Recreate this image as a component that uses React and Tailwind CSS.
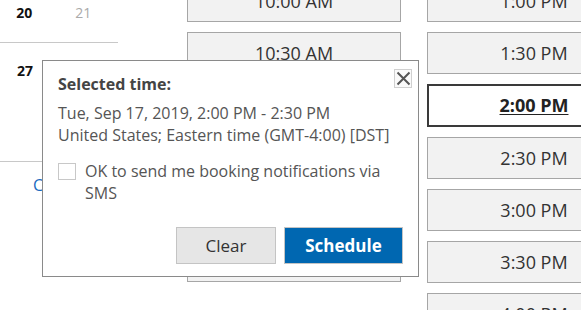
import React from 'react';

const colA = ['10:00 AM', '10:30 AM', '11:00 AM', '11:30 AM', '12:00 PM', '12:30 PM'];
const colB = ['1:00 PM', '1:30 PM', '2:00 PM', '2:30 PM', '3:00 PM', '3:30 PM', '4:00 PM'];

function Slot({ label, selected }) {
  if (selected) {
    return (
      <div className="h-[43px] shrink-0 border-2 border-[#3a3a3a] bg-white flex items-center justify-center text-[18px] font-bold text-[#222] underline underline-offset-2">
        {label}
      </div>
    );
  }
  return (
    <div className="h-[42px] shrink-0 border border-[#a6a6a6] bg-[#f2f2f2] flex items-center justify-center text-[18px] text-[#333]">
      {label}
    </div>
  );
}

export default function App() {
  return (
    <div className="relative w-[581px] h-[310px] overflow-hidden bg-white font-['Open_Sans',sans-serif]">
      <div className="flex">
        {/* calendar */}
        <div className="w-[118px] shrink-0 text-[14px]">
          <div className="h-[43px] border-b border-[#c8c8c8] flex items-start pt-[2px]">
            <span className="w-[50px] text-center font-bold text-[#111]">20</span>
            <span className="w-[72px] text-center text-[#aaa]">21</span>
          </div>
          <div className="h-[119px] border-b border-[#c8c8c8] flex items-start pt-[17px]">
            <span className="w-[50px] text-center font-bold text-[#111]">27</span>
          </div>
          <div className="pl-[33px] pt-[11px] text-[16px] text-[#1a6bbf]">Change</div>
        </div>

        {/* time slots */}
        <div className="ml-[69px] -mt-[20px] flex gap-[26px]">
          <div className="w-[214px] flex flex-col gap-[10px]">
            {colA.map((t) => (
              <Slot key={t} label={t} />
            ))}
          </div>
          <div className="w-[214px] flex flex-col gap-[10px]">
            {colB.map((t) => (
              <Slot key={t} label={t} selected={t === '2:00 PM'} />
            ))}
          </div>
        </div>
      </div>

      {/* popup */}
      <div className="absolute left-[42px] top-[60px] w-[377px] h-[217px] border border-[#8a8a8a] bg-white pl-[15px] pr-[15px] pt-[12px]">
        <button className="absolute right-[6px] top-[8px] w-[18px] h-[19px] border border-[#d0d0d0] bg-[#fafafa] flex items-center justify-center">
          <svg width="15" height="15" viewBox="0 0 15 15">
            <path d="M1.5 1.5 L13.5 13.5 M13.5 1.5 L1.5 13.5" stroke="#555" strokeWidth="2" />
          </svg>
        </button>
        <div className="text-[16px] font-bold text-[#444] leading-[22px]">Selected time:</div>
        <div className="mt-[7px] text-[16px] text-[#555] leading-[22px]">
          <div>Tue, Sep 17, 2019, 2:00 PM - 2:30 PM</div>
          <div>United States; Eastern time (GMT-4:00) [DST]</div>
        </div>
        <div className="mt-[14px] flex items-start gap-[9px]">
          <span className="mt-[3px] w-[18px] h-[17px] shrink-0 border border-[#c8c8c8] bg-white"></span>
          <span className="w-[300px] text-[16px] text-[#555] leading-[22px]">OK to send me booking notifications via SMS</span>
        </div>
        <div className="absolute right-[15px] bottom-[12px] flex gap-[8px]">
          <button className="w-[100px] h-[37px] border border-[#c4c4c4] bg-[#e6e6e6] text-[17px] text-[#333]">Clear</button>
          <button className="w-[119px] h-[37px] border border-[#c4c4c4] bg-[#0067b1] text-[17px] font-bold text-white">Schedule</button>
        </div>
      </div>
    </div>
  );
}
